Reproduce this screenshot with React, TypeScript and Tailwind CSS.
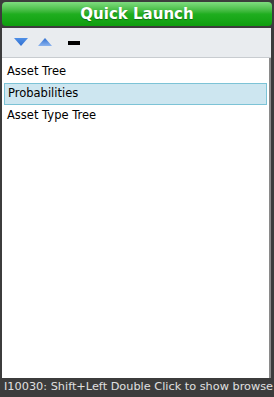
const items = ["Asset Tree", "Probabilities", "Asset Type Tree"];

function TriDown() {
  return (
    <svg width="14" height="9" viewBox="0 0 14 9">
      <defs>
        <linearGradient id="gd" x1="0" y1="0" x2="0" y2="1">
          <stop offset="0" stopColor="#4f8fe6" />
          <stop offset="1" stopColor="#2f6fd0" />
        </linearGradient>
      </defs>
      <polygon points="0,0 14,0 7,8" fill="url(#gd)" />
    </svg>
  );
}

function TriUp() {
  return (
    <svg width="14" height="9" viewBox="0 0 14 9">
      <defs>
        <linearGradient id="gu" x1="0" y1="0" x2="0" y2="1">
          <stop offset="0" stopColor="#2f6fd0" />
          <stop offset="1" stopColor="#8ab3ef" />
        </linearGradient>
      </defs>
      <polygon points="7,0 14,8 0,8" fill="url(#gu)" />
    </svg>
  );
}

export default function App() {
  return (
    <div
      className="w-[274px] h-[397px] bg-[#3c3c3c] flex flex-col overflow-hidden"
      style={{ fontFamily: "Tahoma, 'DejaVu Sans', sans-serif" }}
    >
      {/* title */}
      <div className="mx-[2px] mt-[2px] h-[24px] rounded-[4px] bg-gradient-to-b from-[#7fdc7f] via-[#1fae1f] to-[#0e9e0e] flex items-center justify-center">
        <span className="text-white font-bold text-[15px] [text-shadow:0_1px_1px_rgba(0,0,0,0.35)]">
          Quick Launch
        </span>
      </div>

      {/* toolbar + list */}
      <div className="ml-[2px] mr-[3px] mt-[2px] flex-1 flex flex-col bg-white">
        <div className="h-[30px] bg-[#e9ecef] border-b border-[#c8ccd0] flex items-center gap-[10px] pl-[12px]">
          <TriDown />
          <TriUp />
          <div className="w-[12px] h-[4px] bg-black ml-[6px]" />
        </div>
        <div className="flex-1 flex flex-col pt-[3px] px-[2px] text-[11.5px] text-black border-r-[2px] border-[#8a8a8a]">
          {items.map((it, i) => (
            <div
              key={it}
              className={`h-[22px] flex items-center pl-[3px] ${
                i === 1 ? "bg-[#cde6f0] border border-[#7cc3d6] pl-[2px]" : ""
              }`}
            >
              {it}
            </div>
          ))}
        </div>
      </div>

      {/* status */}
      <div className="h-[19px] flex items-center pl-[4px] text-[11.3px] text-[#e0e0e0] whitespace-nowrap">
        I10030: Shift+Left Double Click to show browse
      </div>
    </div>
  );
}
